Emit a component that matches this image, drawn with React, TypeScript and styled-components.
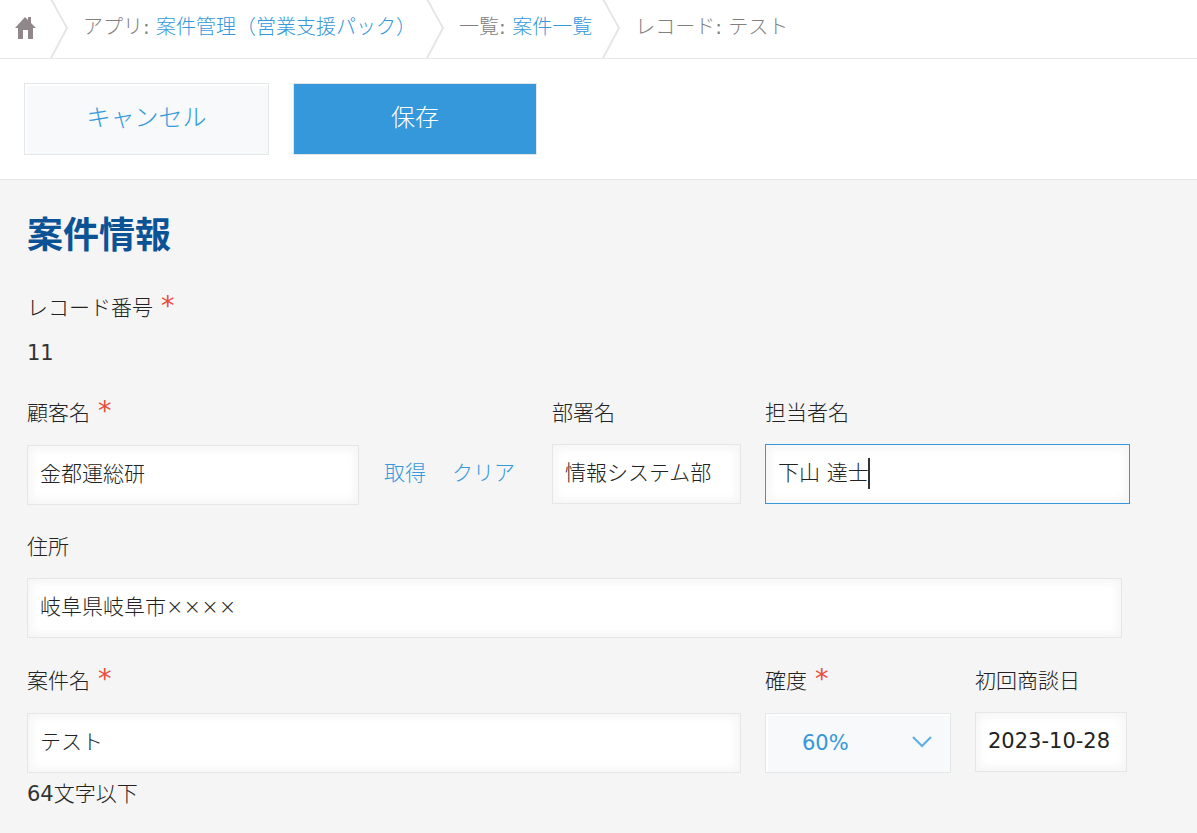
import React from "react";
import styled, { createGlobalStyle } from "styled-components";

const GlobalStyle = createGlobalStyle`
  * { box-sizing: border-box; }
  body {
    margin: 0;
    background: #f5f5f5;
    color: #222;
    font-family: "DejaVu Sans", "Noto Sans CJK JP", sans-serif;
    font-size: 21px;
    font-weight: 300;
    line-height: 24px;
  }
  button, input, select { font: inherit; color: inherit; margin: 0; border-radius: 0; }
  a { color: #3498db; text-decoration: none; }
`;

const Breadcrumbs = styled.nav`
  display: flex;
  height: 59px;
  background: #fff;
  border-bottom: 1px solid #e3e7e8;
  color: #808080;
  font-size: 20px;
  white-space: nowrap;
  overflow: hidden;
`;

const HomeLink = styled.a`
  display: flex;
  align-items: center;
  padding: 0 14px 2px 15px;
`;

const Crumb = styled.span`
  padding: 15px 10px 0 15px;
`;

const Separator = styled.svg`
  flex: none;
  width: 18px;
  height: 58px;
`;

const Toolbar = styled.div`
  display: flex;
  gap: 24px;
  padding: 24px;
  background: #fff;
  border-bottom: 1px solid #e3e7e8;
`;

const ToolbarButton = styled.button<{ $primary?: boolean }>`
  width: ${(p) => (p.$primary ? 244 : 245)}px;
  height: 72px;
  padding: 0 0 2px;
  border: 1px solid #e3e7e8;
  background: ${(p) => (p.$primary ? "#3498db" : "#f7f9fa")};
  box-shadow: ${(p) => (p.$primary ? "none" : "inset 2px 2px 1px #fff")};
  color: ${(p) => (p.$primary ? "#fff" : "#3498db")};
  font-size: 24px;
  cursor: pointer;
`;

const Form = styled.form`
  padding: 38px 67px 24px 27px;
`;

const Title = styled.h1`
  margin: 0 0 42px;
  color: #0b5394;
  font-size: 36px;
  font-weight: 700;
  line-height: 36px;
`;

const Record = styled.div`
  display: flex;
  flex-direction: column;
  gap: 21px;
  margin-bottom: 36px;
`;

const Latin = styled.span`
  color: #333;
  font-weight: 400;
`;

const Colon = styled.span`
  font-weight: 400;
`;

const Row = styled.div<{ $columns: string; $inset?: number }>`
  display: grid;
  grid-template-columns: ${(p) => p.$columns};
  column-gap: 24px;
  align-items: start;
  min-height: 104px;
  margin-right: ${(p) => p.$inset ?? 0}px;
  & + & { margin-top: 30px; }
`;

const Field = styled.div`
  display: flex;
  flex-direction: column;
  min-width: 0;
`;

const Label = styled.label<{ $required?: boolean }>`
  display: flex;
  gap: 8px;
  height: ${(p) => (p.$required ? 44 : 43)}px;
`;

const Caption = styled.span`
  display: flex;
  gap: 8px;
`;

const Mark = styled.span`
  color: #e74c3c;
  font-size: 27px;
  font-weight: 400;
  line-height: 20px;
`;

const TextInput = styled.input<{ $active?: boolean; $latin?: boolean }>`
  width: 100%;
  min-width: 0;
  height: 60px;
  padding: 0 12px ${(p) => (p.$latin ? 2 : 6)}px;
  border: 1px solid ${(p) => (p.$active ? "#3498db" : "#e3e7e8")};
  background: #fff;
  box-shadow: inset 2px 2px 12px #f5f5f5, inset -2px -2px 12px #f5f5f5;
  font-weight: ${(p) => (p.$latin ? 400 : 300)};
  outline: none;
`;

const LookupLine = styled.div`
  display: flex;
  align-items: center;
`;

const LookupActions = styled.div`
  display: flex;
  flex: none;
  gap: 26px;
  padding: 0 13px 4px 25px;
`;

const TextButton = styled.button`
  padding: 0;
  border: 0;
  background: none;
  color: #3498db;
  cursor: pointer;
`;

const Overlay = styled.div`
  position: relative;
`;

const Caret = styled.span`
  position: absolute;
  top: 14px;
  left: 103px;
  width: 2px;
  height: 31px;
  background: #333;
`;

const Select = styled.select`
  appearance: none;
  display: block;
  width: 100%;
  height: 60px;
  padding: 0 36px;
  border: 1px solid #e3e7e8;
  background: #f7f9fa;
  box-shadow: inset 2px 2px 1px #fff;
  color: #3498db;
  font-weight: 400;
`;

const Chevron = styled.svg`
  position: absolute;
  top: 23px;
  right: 19px;
  width: 20px;
  height: 12px;
  pointer-events: none;
`;

const Hint = styled.p`
  margin: 9px 0 0;
`;

const Divider = () => (
  <Separator viewBox="0 0 18 58" aria-hidden="true">
    <path d="M1 -1L17 28L1 58" fill="none" stroke="#e3e7e8" strokeWidth="2" />
  </Separator>
);

interface FieldLabelProps {
  htmlFor: string;
  required?: boolean;
  children: React.ReactNode;
}

const FieldLabel = ({ htmlFor, required, children }: FieldLabelProps) => (
  <Label htmlFor={htmlFor} $required={required}>
    {children}
    {required && <Mark>*</Mark>}
  </Label>
);

export default function App() {
  return (
    <>
      <GlobalStyle />
      <Breadcrumbs>
        <HomeLink href="#home" aria-label="ホーム">
          <svg width="21" height="22" viewBox="0 0 21 22">
            <path
              d="M0 11L10 0L13 3V0H16V6L21 11H18V22H13V13H8V22H3V11Z"
              fill="#8f878a"
            />
          </svg>
        </HomeLink>
        <Divider />
        <Crumb>
          アプリ<Colon>: </Colon>
          <a href="#app">案件管理（営業支援パック）</a>
        </Crumb>
        <Divider />
        <Crumb>
          一覧<Colon>: </Colon>
          <a href="#list">案件一覧</a>
        </Crumb>
        <Divider />
        <Crumb>
          レコード<Colon>: </Colon>テスト
        </Crumb>
      </Breadcrumbs>
      <Toolbar>
        <ToolbarButton type="button">キャンセル</ToolbarButton>
        <ToolbarButton type="submit" form="deal" $primary>
          保存
        </ToolbarButton>
      </Toolbar>
      <Form id="deal" onSubmit={(e) => e.preventDefault()}>
        <Title>案件情報</Title>
        <Record>
          <Caption>
            レコード番号<Mark>*</Mark>
          </Caption>
          <Latin>11</Latin>
        </Record>
        <Row $columns="501fr 189px 365fr">
          <Field>
            <FieldLabel htmlFor="customer" required>
              顧客名
            </FieldLabel>
            <LookupLine>
              <TextInput id="customer" defaultValue="金都運総研" />
              <LookupActions>
                <TextButton type="button">取得</TextButton>
                <TextButton type="button">クリア</TextButton>
              </LookupActions>
            </LookupLine>
          </Field>
          <Field>
            <FieldLabel htmlFor="department">部署名</FieldLabel>
            <TextInput id="department" defaultValue="情報システム部" />
          </Field>
          <Field>
            <FieldLabel htmlFor="contact">担当者名</FieldLabel>
            <Overlay>
              <TextInput id="contact" defaultValue="下山 達士" $active />
              <Caret />
            </Overlay>
          </Field>
        </Row>
        <Row $columns="1fr" $inset={8}>
          <Field>
            <FieldLabel htmlFor="address">住所</FieldLabel>
            <TextInput id="address" defaultValue="岐阜県岐阜市××××" />
          </Field>
        </Row>
        <Row $columns="1fr 186px 152px" $inset={3}>
          <Field>
            <FieldLabel htmlFor="deal-name" required>
              案件名
            </FieldLabel>
            <TextInput id="deal-name" defaultValue="テスト" />
            <Hint>
              <Latin>64</Latin>文字以下
            </Hint>
          </Field>
          <Field>
            <FieldLabel htmlFor="probability" required>
              確度
            </FieldLabel>
            <Overlay>
              <Select id="probability" defaultValue="60%">
                <option>60%</option>
              </Select>
              <Chevron viewBox="0 0 20 12" aria-hidden="true">
                <path d="M1 1L10 10L19 1" fill="none" stroke="#5dade2" strokeWidth="2" />
              </Chevron>
            </Overlay>
          </Field>
          <Field>
            <FieldLabel htmlFor="first-meeting">初回商談日</FieldLabel>
            <TextInput id="first-meeting" defaultValue="2023-10-28" $latin />
          </Field>
        </Row>
      </Form>
    </>
  );
}
